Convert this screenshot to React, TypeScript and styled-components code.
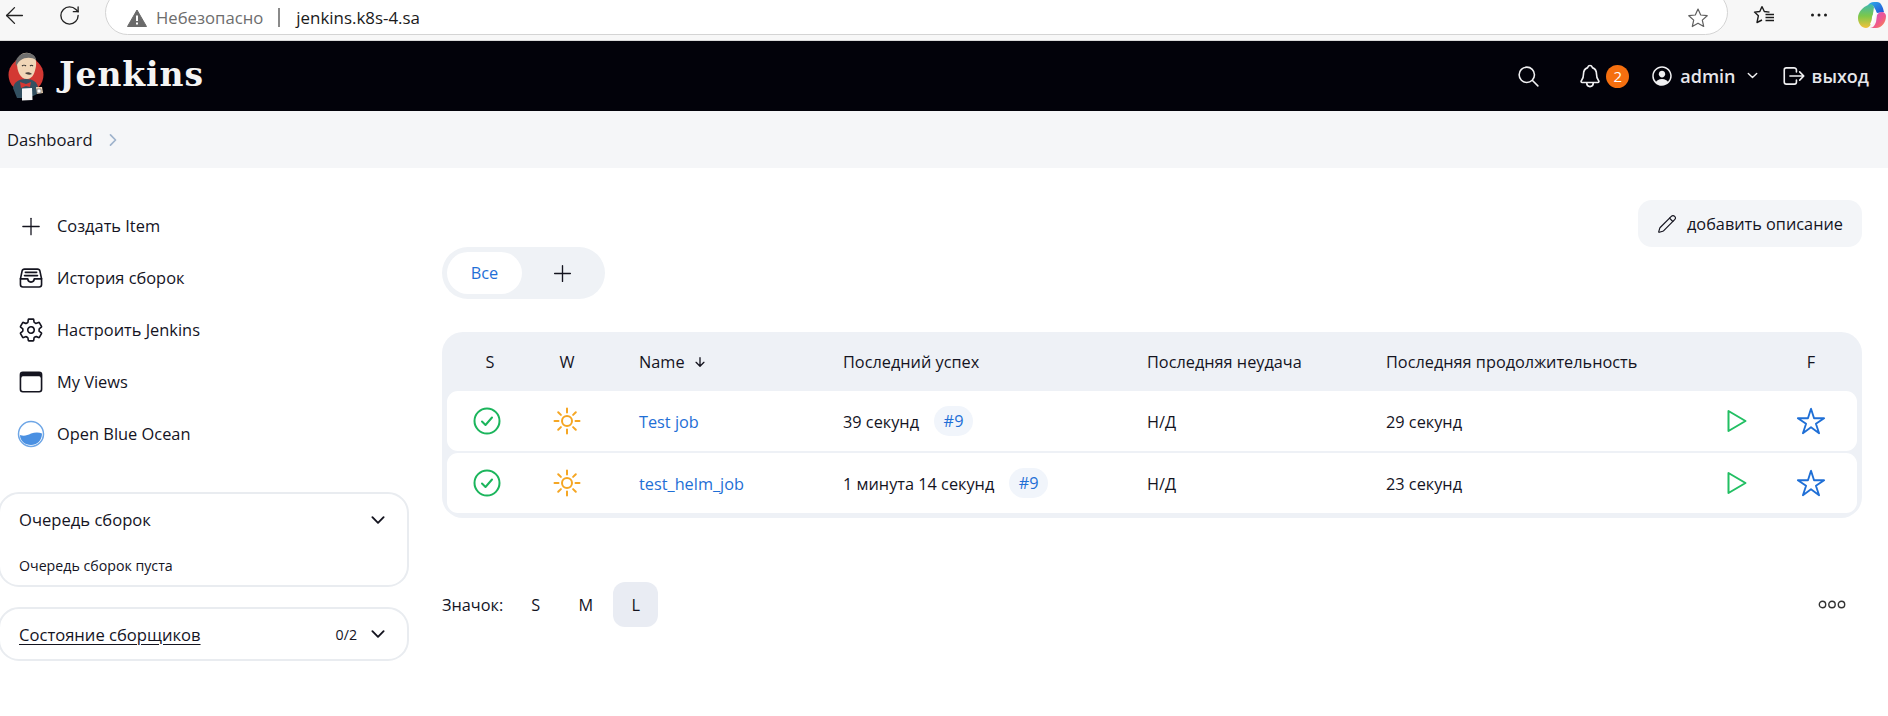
import React from "react";
import styled, { createGlobalStyle } from "styled-components";
import {
  IoFileTrayFullOutline, IoSettingsOutline, IoBrowsersOutline,
  IoSearchOutline, IoNotificationsOutline, IoPersonCircleOutline, IoLogOutOutline,
  IoChevronDownOutline, IoChevronForwardOutline, IoStarOutline,
  IoArrowDownOutline,
} from "react-icons/io5";
import { ArrowLeft, RotateCw, Plus, Pencil } from "lucide-react";

const Global = createGlobalStyle`
  html, body { margin: 0; padding: 0; background: #fff; overflow: hidden; }
  body { font-family: "Open Sans", "Noto Sans", sans-serif; color: #14141f; font-size: 16.3px; }
  * { box-sizing: border-box; }
`;

const Page = styled.div`width: 1888px; height: 716px; overflow: hidden; display: flex; flex-direction: column;`;

const ChromeBar = styled.div`
  height: 41px; background: #f7f7f7; display: flex; align-items: flex-start; overflow: hidden; flex: none;
  border-bottom: 1px solid #d9d9d9;
`;
const ChromeBtn = styled.div<{ $w: number; $shift?: number }>`
  width: ${(p) => p.$w}px; height: 30px; display: flex; align-items: center; justify-content: center; flex: none; color: #222;
  padding-left: ${(p) => p.$shift ?? 0}px;
`;
const AddressPill = styled.div`
  width: 1623px; height: 45px; margin-top: -10px; background: #fff; border: 1.5px solid #d4d4d4; border-radius: 23px;
  display: flex; align-items: center; padding: 10px 18px 0 21px; flex: none; margin-left: 12px;
`;
const Insecure = styled.span`color: #6d6d6d; font-size: 16.7px; margin-left: 9px;`;
const UrlDivider = styled.span`width: 2px; height: 19px; background: #8a8a8a; margin: 0 16px 0 15px;`;
const Url = styled.span`color: #1a1a1a; font-size: 16.9px; flex: 1;`;

const Header = styled.header`
  height: 70px; background: #02020a; display: flex; align-items: center; justify-content: space-between;
  padding: 0 19px 0 8px; flex: none;
`;
const Brand = styled.div`display: flex; align-items: center; gap: 15px;`;
const BrandName = styled.span`
  font-family: "DejaVu Serif", "Liberation Serif", serif; font-weight: 700; font-size: 33px; letter-spacing: 0.9px; color: #f4f4f4; line-height: 1;
  margin-bottom: 4px;
`;
const HeaderTools = styled.div`display: flex; align-items: center; color: #f0f0f2;`;
const ToolIcon = styled.span<{ $left?: number; $right?: number; $up?: number }>`
  display: flex; flex: none;
  margin: ${(p) => `${-(p.$up ?? 0)}px ${p.$right ?? 0}px 0 ${p.$left ?? 0}px`};
`;
const HeaderText = styled.span`font-size: 18px; font-weight: 600; line-height: 24px; color: #e6e6ea;`;
const Badge = styled.span`
  width: 23px; height: 23px; flex: none; border-radius: 50%; background: #f56f0f; color: #fff; font-size: 15px;
  display: flex; align-items: center; justify-content: center; margin: 0 21px 0 3px;
`;

const Breadcrumb = styled.nav`
  height: 57px; background: #f5f6f8; display: flex; align-items: center; padding-left: 7px; gap: 11px; flex: none; font-size: 16.6px;
  color: #17171f; svg { color: #9fb3cc; }
`;

const Main = styled.main`flex: 1; display: grid; grid-template-columns: 442px 1420px; align-items: start;`;
const Sidebar = styled.aside`padding-top: 32px; margin-left: -2px; width: 411px;`;
const TaskList = styled.ul`list-style: none; margin: 0 0 32px; padding: 0;`;
const Task = styled.li`
  height: 52px; display: flex; align-items: center; padding-left: 19px; gap: 12px; font-size: 16.4px;
`;
const TaskLabel = styled.span`margin-top: -2px;`;
const TaskIcon = styled.span`width: 28px; display: flex; justify-content: center; flex: none; color: #14141f;`;
const Card = styled.section`
  border: 2px solid #e9ecf0; border-radius: 21px; padding: 0 19px 0 19px; margin-bottom: 20px;
`;
const CardHead = styled.div<{ $h: number }>`
  height: ${(p) => p.$h}px; display: flex; align-items: center; justify-content: space-between; font-size: 16.6px;
`;
const CardTitle = styled.span<{ $link?: boolean }>`
  text-decoration: ${(p) => (p.$link ? "underline" : "none")}; text-underline-offset: 3px;
`;
const CardMeta = styled.span`display: flex; align-items: center; gap: 11px; font-size: 14.2px;`;
const CardBody = styled.div`font-size: 14.2px; height: 40px; line-height: 20px; padding-top: 11px;`;

const Content = styled.div`padding-top: 32px;`;
const ActionRow = styled.div`display: flex; justify-content: flex-end;`;
const ActionButton = styled.button`
  width: 224px; height: 47px; background: #f3f5f8; border: 0; border-radius: 14px; display: flex; align-items: center;
  padding: 0 0 0 19px; gap: 10px; font: inherit; font-size: 16.3px; color: #14141f;
`;
const Tabs = styled.div`
  width: 163px; height: 52px; border-radius: 26px; background: #eff2f6; padding: 5px; display: flex; align-items: center; gap: 0;
`;
const Tab = styled.div`
  width: 75px; height: 42px; border-radius: 21px; background: #fff; color: #1f6fd6; display: flex; align-items: center; justify-content: center;
`;
const TabAdd = styled.div`flex: 1; display: flex; justify-content: center; padding-left: 3px; color: #14141f;`;

const JobTable = styled.div`
  margin-top: 33px; background: #eef1f6; border-radius: 21px; padding: 0 5px 5px;
`;
const Columns = "86px 68px 212px 304px 239px 344px 74px 74px 9px";
const HeadRow = styled.div`
  height: 59px; display: grid; grid-template-columns: ${Columns}; align-items: center;
`;
const JobRow = styled.div<{ $last?: boolean }>`
  height: 60px; background: #fff; border-radius: 11px; display: grid; grid-template-columns: ${Columns}; align-items: center;
  margin-bottom: ${(p) => (p.$last ? 0 : 2)}px;
`;
const Cell = styled.div<{ $pad?: number; $center?: boolean; $off?: number }>`
  padding-left: ${(p) => p.$pad ?? 0}px;
  padding-right: ${(p) => p.$off ?? 0}px;
  display: flex; align-items: center; gap: 8px;
  justify-content: ${(p) => (p.$center ? "center" : "flex-start")};
`;
const JobLink = styled.a`color: #1f6fd6; text-decoration: none; line-height: 24px; padding-top: 1px;`;
const RowText = styled.span`line-height: 24px; padding-top: 1px;`;
const BuildBadge = styled.a`
  width: 39px; height: 30px; border-radius: 15px; background: #f1f5fb; color: #1f6fd6; display: flex; align-items: center; justify-content: center; margin-left: 7px;
`;

const Footer = styled.div`margin-top: 64px; display: flex; align-items: center; justify-content: space-between; padding-right: 16px;`;
const SizePicker = styled.div`display: flex; align-items: center;`;
const SizeLabel = styled.span`margin-right: 5px;`;
const SizeOption = styled.span<{ $active?: boolean }>`
  width: 45px; height: 45px; margin-left: 5px; border-radius: 12px; display: flex; align-items: center; justify-content: center;
  background: ${(p) => (p.$active ? "#e9ecf3" : "transparent")};
`;

const Logo = () => (
  <svg width="36" height="50" viewBox="0 0 36 50">
    <circle cx="18" cy="24" r="17.500" fill="#d33833" />
    <path d="M5 37c1-6 6-9 13-9s11 3 12 8l-1 7-8 4H9z" fill="#335061" />
    <path d="M9 12c0-6 5-11 11-10 6 1 9 6 8 13-1 6-3 13-9 13-7 0-10-8-10-16z" fill="#f0d6b7" />
    <path d="M8 15c-2-7 4-13 11-13 5 0 9 3 9 7-4-3-11-3-15 0-2 1-3 3-5 6z" fill="#6f6f6f" />
    <path d="M14 15c1-1 3-1 4 0M22 15c1-1 2-1 3 0" stroke="#2b2b2b" strokeWidth="1.100" fill="none" />
    <path d="M17 22c2-1 5-1 7 1-2 1-5 1-7-1z" fill="#49413b" />
    <path d="M12 31l6 2 5-2-1 5-4-1-5 2z" fill="#d33833" />
    <path d="M14 37.500l10-.5 .5 12-10.500 .5z" fill="#f7f7f7" />
    <path d="M28 36l6 0 1 6-6 1z" fill="#f0d6b7" />
    <path d="M29 38h4v4h-4z" fill="#fff" stroke="#555" strokeWidth=".6" />
  </svg>
);

const Warn = () => (
  <svg width="20" height="18" viewBox="0 0 20 18">
    <path d="M10 1 19.500 17.500H.5z" fill="#6a6a6a" stroke="#6a6a6a" strokeLinejoin="round" />
    <path d="M9 6.500h2v5.500H9zM9 13.500h2v2H9z" fill="#fff" />
  </svg>
);

const AddressStar = () => (
  <svg width="22" height="22" viewBox="0 0 22 22" fill="none" stroke="#5f5f5f" strokeWidth="1.200" strokeLinejoin="round">
    <path d="M11 2l2.700 6 6.500.7-4.900 4.400 1.400 6.400L11 16.200l-5.700 3.300 1.400-6.400L1.800 8.700 8.300 8z" />
  </svg>
);

const Favorites = () => (
  <svg width="22" height="20" viewBox="0 0 22 20" fill="none" stroke="#1c1c1c" strokeWidth="1.400" strokeLinejoin="round">
    <path d="M9 1.500l2.300 5 5.200.6" />
    <path d="M9 1.500 6.800 6.500l-5.300.6 3.900 3.600L4 17.500l5-2.500" />
    <path d="M12.500 9.500H21M12.500 12.500H21M12.500 15.500H21" />
  </svg>
);

const Dots = () => (
  <svg width="18" height="4" viewBox="0 0 18 4" fill="#1c1c1c">
    <circle cx="2.500" cy="2" r="1.500" /><circle cx="9" cy="2" r="1.500" /><circle cx="15.500" cy="2" r="1.500" />
  </svg>
);

const Copilot = () => (
  <svg width="30" height="28" viewBox="0 0 30 28">
    <defs>
      <linearGradient id="cpA" x1="0" y1="0" x2="1" y2="1"><stop offset="0" stopColor="#2ab0e8" /><stop offset="1" stopColor="#2350d8" /></linearGradient>
      <linearGradient id="cpB" x1="0" y1="0" x2="0" y2="1"><stop offset="0" stopColor="#3fb8b0" /><stop offset=".5" stopColor="#7cc84a" /><stop offset="1" stopColor="#f4c23c" /></linearGradient>
      <linearGradient id="cpC" x1="0" y1="0" x2="1" y2="1"><stop offset="0" stopColor="#c94fd8" /><stop offset=".6" stopColor="#f05a8a" /><stop offset="1" stopColor="#f7913c" /></linearGradient>
    </defs>
    <path d="M11 5C12 2 14 1 17 1h3c4 0 6 5 7 10l-7 1-3-6c-1-2-3-3-6-1z" fill="url(#cpA)" />
    <path d="M11 4c2-2 5-1 6 2l-2 14c-1 4-3 7-6 7-4 0-8-4-8-10C1 11 6 6 11 4z" fill="url(#cpB)" />
    <path d="M13 27c3 0 5-3 6-6l1-7c1-2 3-3 5-3 2 0 4 2 4 4 0 6-4 12-10 12z" fill="url(#cpC)" />
    <path d="M18 8c1 2 1 4 0 7l-2 7c-1 2-2 2-3 1 1-2 2-4 2-7z" fill="#fff" />
  </svg>
);

const Ocean = () => (
  <svg width="28" height="28" viewBox="0 0 28 28">
    <circle cx="14" cy="14" r="12.500" fill="#fff" stroke="#6ea6e6" strokeWidth="1.500" />
    <path d="M3 15c4 1.500 7 .5 11-1.500 4-1.500 8-1.500 11 0 0 7-5 11.500-11 11.500S3 21 3 15z" fill="#4a90e2" />
  </svg>
);

const StatusOk = () => (
  <svg width="28" height="28" viewBox="0 0 28 28" fill="none" stroke="#1bb55c" strokeWidth="2" strokeLinecap="round" strokeLinejoin="round">
    <circle cx="14" cy="14" r="12.500" />
    <path d="M9 14.500l3.500 3.500 6.500-7.500" />
  </svg>
);

const Sunny = () => (
  <svg width="28" height="28" viewBox="0 0 28 28" fill="none" stroke="#f5a623" strokeWidth="2" strokeLinecap="round">
    <circle cx="14" cy="14" r="5" />
    <path d="M14 1.500v4M14 22.500v4M1.500 14h4M22.500 14h4M5.200 5.200l2.700 2.700M20.100 20.100l2.700 2.700M5.200 22.800l2.700-2.700M20.100 7.900l2.700-2.700" />
  </svg>
);

const PlayBuild = () => (
  <svg width="20" height="24" viewBox="0 0 20 24" fill="none" stroke="#22bf63" strokeWidth="2" strokeLinejoin="round">
    <path d="M1.500 2v20L18.500 12z" />
  </svg>
);

const MoreRings = () => (
  <svg width="28" height="9" viewBox="0 0 28 9" fill="none" stroke="#333" strokeWidth="1.400">
    <circle cx="4.500" cy="4.500" r="3.200" /><circle cx="14" cy="4.500" r="3.200" /><circle cx="23.500" cy="4.500" r="3.200" />
  </svg>
);

const jobs = [
  { name: "Test job", ok: "39 секунд", dur: "29 секунд" },
  { name: "test_helm_job", ok: "1 минута 14 секунд", dur: "23 секунд" },
];

export default function App() {
  return (
    <Page>
      <Global />
      <ChromeBar>
        <ChromeBtn $w={29}><ArrowLeft size={27} strokeWidth={1.200} /></ChromeBtn>
        <ChromeBtn $w={64} $shift={16}><RotateCw size={23} strokeWidth={1.400} /></ChromeBtn>
        <AddressPill>
          <Warn />
          <Insecure>Небезопасно</Insecure>
          <UrlDivider />
          <Url>jenkins.k8s-4.sa</Url>
          <AddressStar />
        </AddressPill>
        <ChromeBtn $w={72}><Favorites /></ChromeBtn>
        <ChromeBtn $w={38}><Dots /></ChromeBtn>
        <ChromeBtn $w={64} $shift={4}><Copilot /></ChromeBtn>
      </ChromeBar>
      <Header>
        <Brand>
          <Logo />
          <BrandName>Jenkins</BrandName>
        </Brand>
        <HeaderTools>
          <ToolIcon $right={36}><IoSearchOutline size={25} /></ToolIcon>
          <ToolIcon><IoNotificationsOutline size={26} /></ToolIcon>
          <Badge>2</Badge>
          <ToolIcon $right={6}><IoPersonCircleOutline size={24} /></ToolIcon>
          <HeaderText>admin</HeaderText>
          <ToolIcon $left={9} $right={21} $up={2}><IoChevronDownOutline size={15} /></ToolIcon>
          <ToolIcon $right={5}><IoLogOutOutline size={26} /></ToolIcon>
          <HeaderText>выход</HeaderText>
        </HeaderTools>
      </Header>
      <Breadcrumb>
        <span>Dashboard</span>
        <IoChevronForwardOutline size={18} />
      </Breadcrumb>
      <Main>
        <Sidebar>
          <TaskList>
            <Task><TaskIcon><Plus size={31} strokeWidth={1.100} /></TaskIcon><TaskLabel>Создать Item</TaskLabel></Task>
            <Task><TaskIcon><IoFileTrayFullOutline size={26} /></TaskIcon><TaskLabel>История сборок</TaskLabel></Task>
            <Task><TaskIcon><IoSettingsOutline size={26} /></TaskIcon><TaskLabel>Настроить Jenkins</TaskLabel></Task>
            <Task><TaskIcon><IoBrowsersOutline size={26} /></TaskIcon><TaskLabel>My Views</TaskLabel></Task>
            <Task><TaskIcon><Ocean /></TaskIcon><TaskLabel>Open Blue Ocean</TaskLabel></Task>
          </TaskList>
          <Card>
            <CardHead $h={51}>
              <CardTitle>Очередь сборок</CardTitle>
              <IoChevronDownOutline size={20} />
            </CardHead>
            <CardBody>Очередь сборок пуста</CardBody>
          </Card>
          <Card>
            <CardHead $h={50}>
              <CardTitle $link>Состояние сборщиков</CardTitle>
              <CardMeta>0/2<IoChevronDownOutline size={20} /></CardMeta>
            </CardHead>
          </Card>
        </Sidebar>
        <Content>
          <ActionRow>
            <ActionButton><Pencil size={20} strokeWidth={1.400} />добавить описание</ActionButton>
          </ActionRow>
          <Tabs>
            <Tab>Все</Tab>
            <TabAdd><Plus size={27} strokeWidth={1.200} /></TabAdd>
          </Tabs>
          <JobTable>
            <HeadRow>
              <Cell $center>S</Cell>
              <Cell $center>W</Cell>
              <Cell $pad={38}>Name <IoArrowDownOutline size={14} /></Cell>
              <Cell $pad={30}>Последний успех</Cell>
              <Cell $pad={30}>Последняя неудача</Cell>
              <Cell $pad={30}>Последняя продолжительность</Cell>
              <Cell />
              <Cell $center>F</Cell>
            </HeadRow>
            {jobs.map((j, i) => (
              <JobRow key={j.name} $last={i === jobs.length - 1}>
                <Cell $center $off={6}><StatusOk /></Cell>
                <Cell $center><Sunny /></Cell>
                <Cell $pad={38}><JobLink>{j.name}</JobLink></Cell>
                <Cell $pad={30}><RowText>{j.ok}</RowText><BuildBadge>#9</BuildBadge></Cell>
                <Cell $pad={30}><RowText>Н/Д</RowText></Cell>
                <Cell $pad={30}><RowText>{j.dur}</RowText></Cell>
                <Cell $center><PlayBuild /></Cell>
                <Cell $center><IoStarOutline size={30} color="#1f6fd6" /></Cell>
              </JobRow>
            ))}
          </JobTable>
          <Footer>
            <SizePicker>
              <SizeLabel>Значок:</SizeLabel>
              <SizeOption>S</SizeOption>
              <SizeOption>M</SizeOption>
              <SizeOption $active>L</SizeOption>
            </SizePicker>
            <MoreRings />
          </Footer>
        </Content>
      </Main>
    </Page>
  );
}
